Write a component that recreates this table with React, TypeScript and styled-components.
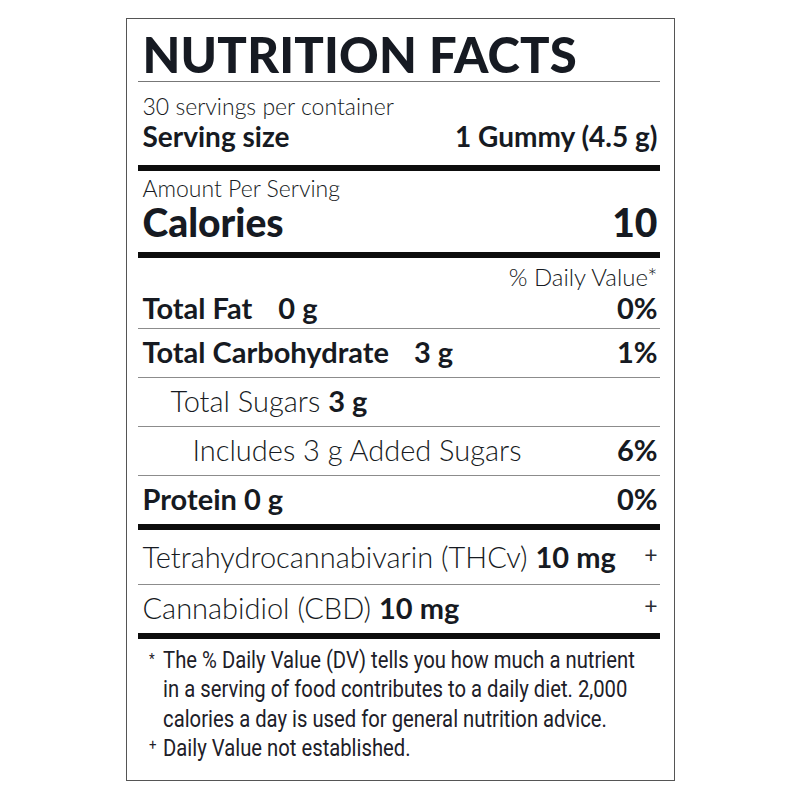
import React from "react";
import styled, { createGlobalStyle } from "styled-components";

const ink = "#161a22";

const GlobalStyle = createGlobalStyle`
  html, body {
    margin: 0;
    padding: 0;
    background: #fff;
  }
  body {
    font-family: Lato, "Noto Sans", sans-serif;
    color: ${ink};
  }
`;

const Label = styled.div`
  box-sizing: border-box;
  width: 549px;
  height: 763px;
  margin: 18px auto 0;
  border: 1px solid #555;
  padding: 0 14px 0 11px;
  display: flex;
  flex-direction: column;
`;

const Title = styled.h1`
  margin: 8px 0 0;
  padding-left: 5px;
  font-size: 49px;
  line-height: 54px;
  font-weight: 900;
  letter-spacing: 0.2px;
  border-bottom: 1px solid #777;
`;

const Section = styled.div<{ $rule: "thin" | "thick"; $pt?: number; $pb?: number }>`
  padding: ${(p) => p.$pt || 0}px 2px ${(p) => p.$pb || 0}px 5px;
  border-bottom: ${(p) => (p.$rule === "thick" ? "6px solid #0d0d0d" : "1px solid #8c8c8c")};
`;

const Line = styled.div<{ $size: number; $lh: number; $weight?: number }>`
  display: flex;
  justify-content: space-between;
  align-items: baseline;
  font-size: ${(p) => p.$size}px;
  line-height: ${(p) => p.$lh}px;
  font-weight: ${(p) => p.$weight || 300};
  white-space: nowrap;
`;

const RightNote = styled.div`
  text-align: right;
  font-size: 24px;
  line-height: 26px;
  font-weight: 300;
`;

const Row = styled.div<{ $indent?: number; $rule: "thin" | "thick" }>`
  display: flex;
  justify-content: space-between;
  align-items: baseline;
  padding: 0 2px 2px ${(p) => 5 + (p.$indent || 0)}px;
  font-size: 29px;
  line-height: 46px;
  white-space: nowrap;
  border-bottom: ${(p) => (p.$rule === "thick" ? "6px solid #0d0d0d" : "1px solid #8c8c8c")};
`;

const Strong = styled.span<{ $gap?: number }>`
  font-weight: 700;
  margin-left: ${(p) => p.$gap || 0}px;
`;

const Light = styled.span`
  font-weight: 300;
`;

const Compound = styled.div<{ $lh: number; $pt?: number; $rule: "thin" | "thick" }>`
  display: flex;
  justify-content: space-between;
  align-items: baseline;
  padding: ${(p) => p.$pt || 0}px 2px 0 5px;
  font-size: 29px;
  line-height: ${(p) => p.$lh}px;
  font-weight: 300;
  white-space: nowrap;
  border-bottom: ${(p) => (p.$rule === "thick" ? "6px solid #0d0d0d" : "1px solid #8c8c8c")};
`;

const Plus = styled.span`
  font-size: 23px;
  font-weight: 400;
  color: #2a2d33;
  position: relative;
  top: -5px;
`;

const Notes = styled.div`
  padding: 7px 0 0 12.5px;
  font-family: Roboto, "Liberation Sans", sans-serif;
  font-size: 23px;
  line-height: 29.3px;
  color: #1d2028;
  transform: scaleX(0.88);
  transform-origin: left top;
`;

const Note = styled.div`
  display: grid;
  grid-template-columns: 16px 1fr;
  white-space: nowrap;
`;

const Mark = styled.span<{ $raise?: number }>`
  font-size: 15px;
  position: relative;
  top: ${(p) => -(p.$raise || 0)}px;
`;

export default function App() {
  return (
    <>
      <GlobalStyle />
      <Label>
        <Title>NUTRITION FACTS</Title>

        <Section $rule="thick" $pt={10} $pb={13}>
          <Line $size={23} $lh={28}>
            30 servings per container
          </Line>
          <Line $size={28} $lh={32} $weight={700}>
            <span>Serving size</span>
            <span>1 Gummy (4.5 g)</span>
          </Line>
        </Section>

        <Section $rule="thick" $pt={4} $pb={9}>
          <Line $size={23} $lh={26}>
            Amount Per Serving
          </Line>
          <Line $size={39} $lh={42} $weight={900}>
            <span>Calories</span>
            <span>10</span>
          </Line>
        </Section>

        <Section $rule="thin" $pt={6} $pb={2}>
          <RightNote>% Daily Value*</RightNote>
          <Line $size={29} $lh={36} $weight={700}>
            <span>
              Total Fat<Strong $gap={26}>0 g</Strong>
            </span>
            <span>0%</span>
          </Line>
        </Section>

        <Row $rule="thin">
          <Strong>
            Total Carbohydrate<Strong $gap={25}>3 g</Strong>
          </Strong>
          <Strong>1%</Strong>
        </Row>
        <Row $rule="thin" $indent={28}>
          <span>
            <Light>Total Sugars </Light>
            <Strong>3 g</Strong>
          </span>
        </Row>
        <Row $rule="thin" $indent={50}>
          <Light>Includes 3 g Added Sugars</Light>
          <Strong>6%</Strong>
        </Row>
        <Row $rule="thick">
          <Strong>Protein 0 g</Strong>
          <Strong>0%</Strong>
        </Row>

        <Compound $rule="thin" $lh={49} $pt={2}>
          <span>
            Tetrahydrocannabivarin (THCv) <Strong>10 mg</Strong>
          </span>
          <Plus>+</Plus>
        </Compound>
        <Compound $rule="thick" $lh={46}>
          <span>
            Cannabidiol (CBD) <Strong>10 mg</Strong>
          </span>
          <Plus>+</Plus>
        </Compound>

        <Notes>
          <Note>
            <Mark $raise={1}>*</Mark>
            <span>
              The % Daily Value (DV) tells you how much a nutrient
              <br />
              in a serving of food contributes to a daily diet. 2,000
              <br />
              calories a day is used for general nutrition advice.
            </span>
          </Note>
          <Note>
            <Mark $raise={3}>+</Mark>
            <span>Daily Value not established.</span>
          </Note>
        </Notes>
      </Label>
    </>
  );
}
